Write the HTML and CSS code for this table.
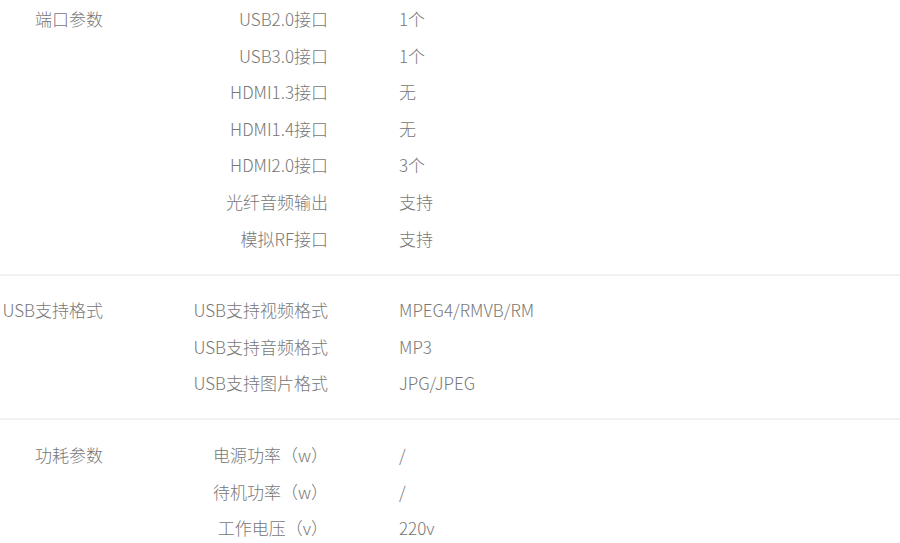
FILE: index.html
```html
<!DOCTYPE html>
<html lang="zh-CN">
<head>
<meta charset="utf-8">
<title>参数</title>
<link rel="stylesheet" href="styles.css">
</head>
<body>
<div class="specs">
  <section class="group first">
    <div class="group-label">端口参数</div>
    <div class="rows">
      <div class="key">USB2.0接口</div><div class="val">1个</div>
      <div class="key">USB3.0接口</div><div class="val">1个</div>
      <div class="key">HDMI1.3接口</div><div class="val">无</div>
      <div class="key">HDMI1.4接口</div><div class="val">无</div>
      <div class="key">HDMI2.0接口</div><div class="val">3个</div>
      <div class="key">光纤音频输出</div><div class="val">支持</div>
      <div class="key">模拟RF接口</div><div class="val">支持</div>
    </div>
  </section>
  <section class="group">
    <div class="group-label">USB支持格式</div>
    <div class="rows">
      <div class="key">USB支持视频格式</div><div class="val">MPEG4/RMVB/RM</div>
      <div class="key">USB支持音频格式</div><div class="val">MP3</div>
      <div class="key">USB支持图片格式</div><div class="val">JPG/JPEG</div>
    </div>
  </section>
  <section class="group last">
    <div class="group-label">功耗参数</div>
    <div class="rows">
      <div class="key">电源功率（w）</div><div class="val">/</div>
      <div class="key">待机功率（w）</div><div class="val">/</div>
      <div class="key">工作电压（v）</div><div class="val">220v</div>
    </div>
  </section>
</div>
</body>
</html>
```
FILE: styles.css
```css
html, body {
  margin: 0;
  padding: 0;
  background: #ffffff;
}
body {
  font-family: "Noto Sans CJK SC", "Noto Sans", sans-serif;
  font-size: 17px;
  font-weight: 300;
  color: #777777;
}
.specs {
  width: 900px;
}
.group {
  display: flex;
  padding: 16px 0 16px;
  border-bottom: 2px solid #f1f1f1;
  line-height: 36.6px;
}
.group.first {
  padding-top: 1px;
  padding-bottom: 17px;
}
.group.last {
  padding-top: 17px;
  border-bottom: none;
}
.group-label {
  width: 103px;
  text-align: right;
  flex: none;
}
.rows {
  display: grid;
  grid-template-columns: 225px 1fr;
  column-gap: 71px;
}
.key {
  text-align: right;
}
.val {
  text-align: left;
}
```
